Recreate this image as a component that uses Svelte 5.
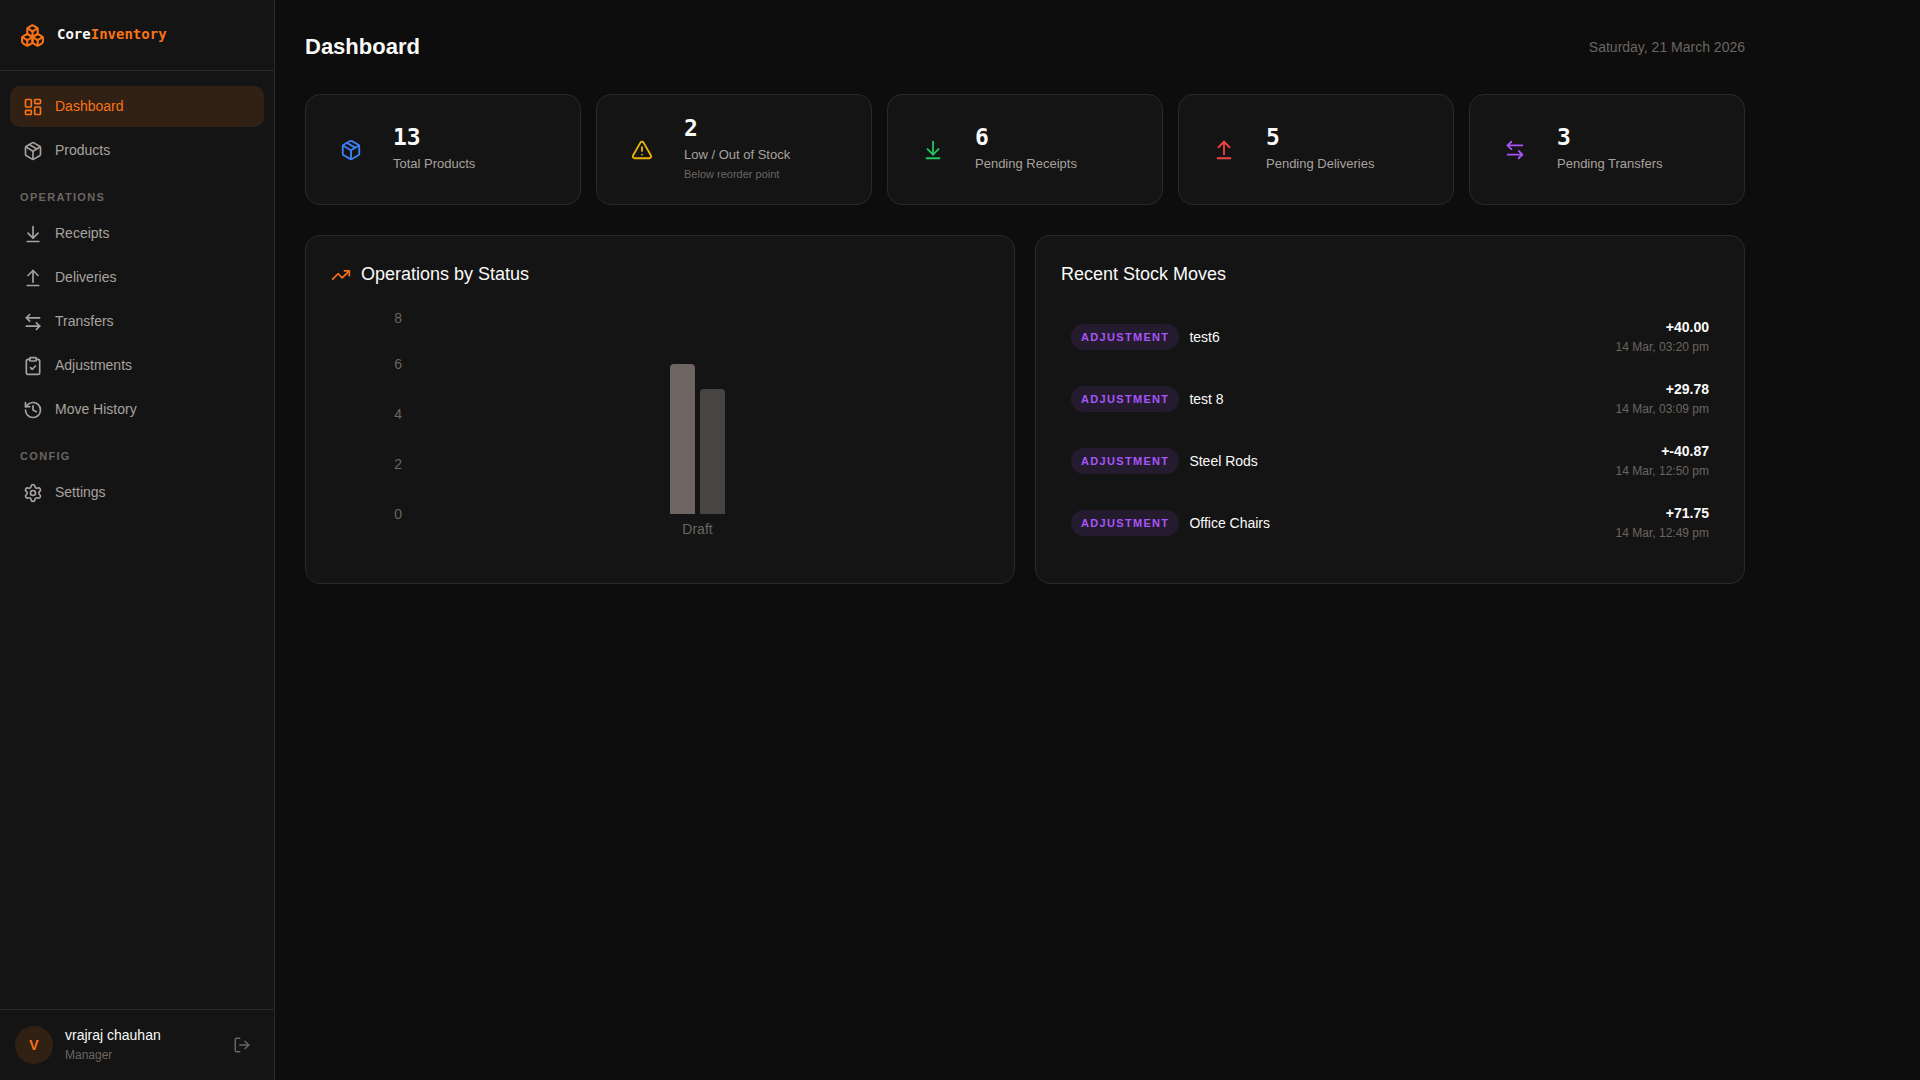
<!-- Dashboard.svelte -->
<script>
    const icons = {
        boxes: [
            'M2.97 12.92A2 2 0 0 0 2 14.63v3.24a2 2 0 0 0 .97 1.71l3 1.8a2 2 0 0 0 2.06 0L12 19v-5.5l-5-3-4.03 2.42Z',
            'm7 16.5-4.74-2.85',
            'm7 16.5 5-3',
            'M7 16.5v5.17',
            'M12 13.5V19l3.97 2.38a2 2 0 0 0 2.06 0l3-1.8a2 2 0 0 0 .97-1.71v-3.24a2 2 0 0 0-.97-1.71L17 10.5l-5 3Z',
            'm17 16.5-5-3',
            'm17 16.5 4.74-2.85',
            'M17 16.5v5.17',
            'M7.97 4.42A2 2 0 0 0 7 6.13v4.37l5 3 5-3V6.13a2 2 0 0 0-.97-1.71l-3-1.8a2 2 0 0 0-2.06 0l-3 1.8Z',
            'M12 8 7.26 5.15',
            'm12 8 4.74-2.85',
            'M12 13.5V8'
        ],
        dashboard: [
            'M4 3h5a1 1 0 0 1 1 1v7a1 1 0 0 1-1 1H4a1 1 0 0 1-1-1V4a1 1 0 0 1 1-1Z',
            'M15 3h5a1 1 0 0 1 1 1v3a1 1 0 0 1-1 1h-5a1 1 0 0 1-1-1V4a1 1 0 0 1 1-1Z',
            'M15 12h5a1 1 0 0 1 1 1v7a1 1 0 0 1-1 1h-5a1 1 0 0 1-1-1v-7a1 1 0 0 1 1-1Z',
            'M4 16h5a1 1 0 0 1 1 1v3a1 1 0 0 1-1 1H4a1 1 0 0 1-1-1v-3a1 1 0 0 1 1-1Z'
        ],
        box: [
            'M11 21.73a2 2 0 0 0 2 0l7-4A2 2 0 0 0 21 16V8a2 2 0 0 0-1-1.73l-7-4a2 2 0 0 0-2 0l-7 4A2 2 0 0 0 3 8v8a2 2 0 0 0 1 1.73z',
            'M12 22V12',
            'm3.3 7 7.703 4.734a2 2 0 0 0 1.994 0L20.7 7',
            'm7.5 4.27 9 5.15'
        ],
        warning: [
            'm21.73 18-8-14a2 2 0 0 0-3.48 0l-8 14A2 2 0 0 0 4 21h16a2 2 0 0 0 1.73-3',
            'M12 9v4',
            'M12 17h.01'
        ],
        receive: ['M12 17V3', 'm6 11 6 6 6-6', 'M19 21H5'],
        deliver: ['m18 9-6-6-6 6', 'M12 3v14', 'M5 21h14'],
        transfer: ['M8 3 4 7l4 4', 'M4 7h16', 'm16 21 4-4-4-4', 'M20 17H4'],
        clipboard: [
            'M9 2h6a1 1 0 0 1 1 1v2a1 1 0 0 1-1 1H9a1 1 0 0 1-1-1V3a1 1 0 0 1 1-1Z',
            'M16 4h2a2 2 0 0 1 2 2v14a2 2 0 0 1-2 2H6a2 2 0 0 1-2-2V6a2 2 0 0 1 2-2h2',
            'm9 14 2 2 4-4'
        ],
        history: [
            'M3 12a9 9 0 1 0 9-9 9.75 9.75 0 0 0-6.74 2.74L3 8',
            'M3 3v5h5',
            'M12 7v5l4 2'
        ],
        settings: [
            'M9.671 4.136a2.34 2.34 0 0 1 4.659 0 2.34 2.34 0 0 0 3.319 1.915 2.34 2.34 0 0 1 2.33 4.033 2.34 2.34 0 0 0 0 3.831 2.34 2.34 0 0 1-2.33 4.033 2.34 2.34 0 0 0-3.319 1.915 2.34 2.34 0 0 1-4.659 0 2.34 2.34 0 0 0-3.32-1.915 2.34 2.34 0 0 1-2.33-4.033 2.34 2.34 0 0 0 0-3.831A2.34 2.34 0 0 1 6.35 6.051a2.34 2.34 0 0 0 3.319-1.915',
            'M15 12a3 3 0 1 1-6 0 3 3 0 0 1 6 0Z'
        ],
        trending: ['M16 7h6v6', 'm22 7-8.5 8.5-5-5L2 17'],
        logout: ['m16 17 5-5-5-5', 'M21 12H9', 'M9 21H5a2 2 0 0 1-2-2V5a2 2 0 0 1 2-2h4']
    };

    const navSections = [
        {
            title: '',
            items: [
                { label: 'Dashboard', icon: 'dashboard', active: true },
                { label: 'Products', icon: 'box' }
            ]
        },
        {
            title: 'Operations',
            items: [
                { label: 'Receipts', icon: 'receive' },
                { label: 'Deliveries', icon: 'deliver' },
                { label: 'Transfers', icon: 'transfer' },
                { label: 'Adjustments', icon: 'clipboard' },
                { label: 'Move History', icon: 'history' }
            ]
        },
        {
            title: 'Config',
            items: [{ label: 'Settings', icon: 'settings' }]
        }
    ];

    const stats = [
        { value: 13, label: 'Total Products', icon: 'box', color: 'blue' },
        { value: 2, label: 'Low / Out of Stock', icon: 'warning', color: 'yellow', note: 'Below reorder point' },
        { value: 6, label: 'Pending Receipts', icon: 'receive', color: 'green' },
        { value: 5, label: 'Pending Deliveries', icon: 'deliver', color: 'red' },
        { value: 3, label: 'Pending Transfers', icon: 'transfer', color: 'purple' }
    ];

    const ticks = [8, 6, 4, 2, 0];
    const unitHeight = 25; // px per operation
    const draft = { receipts: 6, deliveries: 5 };

    const moves = [
        { type: 'Adjustment', product: 'test6', qty: '+40.00', date: '14 Mar, 03:20 pm' },
        { type: 'Adjustment', product: 'test 8', qty: '+29.78', date: '14 Mar, 03:09 pm' },
        { type: 'Adjustment', product: 'Steel Rods', qty: '+-40.87', date: '14 Mar, 12:50 pm' },
        { type: 'Adjustment', product: 'Office Chairs', qty: '+71.75', date: '14 Mar, 12:49 pm' }
    ];
</script>

{#snippet icon(name, size)}
    <svg
        width={size}
        height={size}
        viewBox="0 0 24 24"
        fill="none"
        stroke="currentColor"
        stroke-width="2"
        stroke-linecap="round"
        stroke-linejoin="round"
        aria-hidden="true"
    >
        {#each icons[name] as d}
            <path {d} />
        {/each}
    </svg>
{/snippet}

<div class="layout">
    <aside class="sidebar">
        <div class="brand">
            {@render icon('boxes', 25)}
            <span class="brand-name">Core<span class="accent">Inventory</span></span>
        </div>

        <nav class="nav">
            {#each navSections as section}
                {#if section.title}
                    <div class="nav-title">{section.title}</div>
                {/if}
                {#each section.items as item}
                    <a href="#{item.icon}" class="nav-item" class:active={item.active}>
                        {@render icon(item.icon, 20)}
                        <span>{item.label}</span>
                    </a>
                {/each}
            {/each}
        </nav>

        <div class="user">
            <div class="avatar">V</div>
            <div class="user-info">
                <div class="user-name">vrajraj chauhan</div>
                <div class="user-role">Manager</div>
            </div>
            <button class="logout" type="button" aria-label="Log out">
                {@render icon('logout', 18)}
            </button>
        </div>
    </aside>

    <main class="main">
        <div class="content">
            <header class="page-header">
                <h1>Dashboard</h1>
                <span class="today">Saturday, 21 March 2026</span>
            </header>

            <section class="stats">
                {#each stats as stat}
                    <div class="card stat">
                        <div class="stat-icon {stat.color}">
                            {@render icon(stat.icon, 22)}
                        </div>
                        <div>
                            <div class="stat-value">{stat.value}</div>
                            <div class="stat-label">{stat.label}</div>
                            {#if stat.note}
                                <div class="stat-note">{stat.note}</div>
                            {/if}
                        </div>
                    </div>
                {/each}
            </section>

            <section class="panels">
                <div class="card panel">
                    <h2>
                        <span class="accent">{@render icon('trending', 20)}</span>
                        Operations by Status
                    </h2>
                    <div class="chart">
                        <div class="axis">
                            {#each ticks as tick}
                                <div class="tick">{tick}</div>
                            {/each}
                        </div>
                        <div class="plot">
                            <div class="bars">
                                <div class="bar receipts" style="height: {draft.receipts * unitHeight}px"></div>
                                <div class="bar deliveries" style="height: {draft.deliveries * unitHeight}px"></div>
                            </div>
                            <div class="category">Draft</div>
                        </div>
                    </div>
                </div>

                <div class="card panel">
                    <h2>Recent Stock Moves</h2>
                    <ul class="moves">
                        {#each moves as move}
                            <li class="move">
                                <span class="badge">{move.type}</span>
                                <span class="product">{move.product}</span>
                                <div class="amount">
                                    <div class="qty">{move.qty}</div>
                                    <div class="date">{move.date}</div>
                                </div>
                            </li>
                        {/each}
                    </ul>
                </div>
            </section>
        </div>
    </main>
</div>

<style>
    :global(body) {
        margin: 0;
        background: #0d0d0d;
    }

    .layout {
        display: flex;
        min-height: 100vh;
        background: #0d0d0d;
        color: #fafaf9;
        font-family: 'Liberation Sans', Arial, sans-serif;
        font-size: 14px;
        line-height: 20px;
    }

    .layout * {
        box-sizing: border-box;
    }

    svg {
        display: block;
        flex-shrink: 0;
    }

    .accent {
        color: #f97316;
    }

    /* Sidebar */
    .sidebar {
        position: sticky;
        top: 0;
        display: flex;
        flex-direction: column;
        flex-shrink: 0;
        width: 275px;
        height: 100vh;
        background: #141414;
        border-right: 1px solid #2a2a2a;
    }

    .brand {
        display: flex;
        align-items: flex-start;
        gap: 12px;
        padding: 23px 20px 22px;
        color: #f97316;
        border-bottom: 1px solid #2a2a2a;
    }

    .brand-name {
        color: #fafaf9;
        font-family: 'DejaVu Sans Mono', monospace;
        font-weight: 700;
        line-height: 23px;
    }

    .nav {
        display: flex;
        flex: 1;
        flex-direction: column;
        gap: 3px;
        padding: 15px 10px;
    }

    .nav-title {
        padding: 15px 10px 4px;
        color: #6b6560;
        font-size: 11px;
        font-weight: 700;
        line-height: 17px;
        letter-spacing: 0.12em;
        text-transform: uppercase;
    }

    .nav-item {
        display: flex;
        align-items: center;
        gap: 12px;
        padding: 10px 13px;
        color: #a8a29e;
        line-height: 21px;
        text-decoration: none;
        border-radius: 10px;
    }

    .nav-item:hover {
        background: #1f1f1f;
    }

    .nav-item.active {
        color: #f97316;
        background: rgba(249, 115, 22, 0.13);
    }

    .user {
        display: flex;
        align-items: center;
        gap: 12px;
        padding: 15px;
        border-top: 1px solid #2a2a2a;
    }

    .avatar {
        display: flex;
        align-items: center;
        justify-content: center;
        width: 38px;
        height: 38px;
        color: #f97316;
        font-weight: 700;
        background: rgba(249, 115, 22, 0.13);
        border-radius: 50%;
    }

    .user-info {
        flex: 1;
    }

    .user-role {
        color: #6b6560;
        font-size: 12px;
    }

    .logout {
        padding: 8px;
        color: #6b6560;
        background: none;
        border: none;
        cursor: pointer;
    }

    /* Page */
    .main {
        flex: 1;
        min-width: 0;
        padding: 30px;
    }

    .content {
        max-width: 1440px;
    }

    .page-header {
        display: flex;
        align-items: center;
        justify-content: space-between;
        margin-bottom: 30px;
    }

    h1 {
        margin: 0;
        font-size: 22px;
        font-weight: 700;
        line-height: 34px;
    }

    .today {
        color: #6b6560;
    }

    .card {
        background: #141414;
        border: 1px solid #2a2a2a;
        border-radius: 15px;
    }

    .stats {
        display: grid;
        grid-template-columns: repeat(5, 1fr);
        gap: 15px;
        margin-bottom: 30px;
    }

    .stat {
        display: flex;
        align-items: center;
        gap: 18px;
        padding: 21px;
    }

    .stat-icon {
        display: flex;
        align-items: center;
        justify-content: center;
        width: 48px;
        height: 48px;
    }

    .blue {
        color: #3b82f6;
    }

    .yellow {
        color: #eab308;
    }

    .green {
        color: #22c55e;
    }

    .red {
        color: #ef4444;
    }

    .purple {
        color: #a855f7;
    }

    .stat-value {
        font-family: 'DejaVu Sans Mono', monospace;
        font-size: 23px;
        font-weight: 700;
        line-height: 25px;
    }

    .stat-label {
        margin-top: 4px;
        color: #a8a29e;
        font-size: 13px;
    }

    .stat-note {
        margin-top: 1px;
        color: #6b6560;
        font-size: 11px;
        line-height: 17px;
    }

    .panels {
        display: grid;
        grid-template-columns: repeat(2, 1fr);
        gap: 20px;
    }

    .panel {
        padding: 25px;
    }

    h2 {
        display: flex;
        align-items: center;
        gap: 10px;
        margin: 0 0 20px;
        font-size: 18px;
        font-weight: 400;
        line-height: 27px;
    }

    /* Bar chart */
    .chart {
        display: flex;
        height: 250px;
        color: #6b6560;
    }

    .axis {
        width: 75px;
        padding-right: 4px;
    }

    .tick {
        display: flex;
        align-items: flex-end;
        justify-content: flex-end;
        height: 50px;
    }

    .tick:first-child {
        align-items: flex-start;
        height: 16px;
    }

    .plot {
        flex: 1;
    }

    .bars {
        display: flex;
        align-items: flex-end;
        justify-content: center;
        gap: 5px;
        height: 206px;
    }

    .bar {
        width: 25px;
        border-radius: 4px 4px 0 0;
    }

    .receipts {
        background: #6e6562;
    }

    .deliveries {
        background: #474441;
    }

    .category {
        padding-top: 5px;
        text-align: center;
    }

    /* Stock moves */
    .moves {
        display: flex;
        flex-direction: column;
        gap: 4px;
        margin: 0;
        padding: 0;
        list-style: none;
    }

    .move {
        display: flex;
        align-items: center;
        gap: 10px;
        padding: 10px;
    }

    .badge {
        padding: 3px 10px;
        color: #a855f7;
        font-size: 11px;
        font-weight: 700;
        letter-spacing: 0.12em;
        text-transform: uppercase;
        background: rgba(168, 85, 247, 0.12);
        border-radius: 13px;
    }

    .product {
        flex: 1;
    }

    .amount {
        text-align: right;
    }

    .qty {
        font-weight: 700;
        line-height: 19px;
    }

    .date {
        margin-top: 2px;
        color: #6b6560;
        font-size: 12px;
        line-height: 17px;
    }
</style>
